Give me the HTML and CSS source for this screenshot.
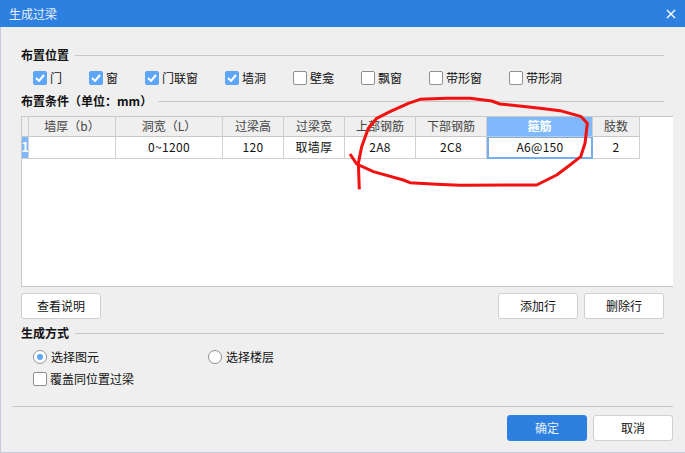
FILE: index.html
```html
<!DOCTYPE html>
<html lang="zh-CN">
<head>
<meta charset="utf-8">
<title>生成过梁</title>
<link rel="stylesheet" href="styles.css">
</head>
<body>
<div class="dialog">
  <header class="titlebar">
    <span class="title">生成过梁</span>
    <svg class="close" width="10" height="10" viewBox="0 0 10 10"><path d="M1 1l8 8M9 1l-8 8" stroke="#fff" stroke-width="1.4" fill="none"/></svg>
  </header>
  <main class="content">
    <div class="section-head first"><span class="section-name">布置位置</span><span class="rule"></span></div>
    <div class="check-row">
      <label class="opt w56"><span class="box on"><svg width="10" height="8" viewBox="0 0 10 8"><path d="M1 4l3 3 5-6" stroke="#fff" stroke-width="2" fill="none"/></svg></span>门</label>
      <label class="opt w56"><span class="box on"><svg width="10" height="8" viewBox="0 0 10 8"><path d="M1 4l3 3 5-6" stroke="#fff" stroke-width="2" fill="none"/></svg></span>窗</label>
      <label class="opt w80"><span class="box on"><svg width="10" height="8" viewBox="0 0 10 8"><path d="M1 4l3 3 5-6" stroke="#fff" stroke-width="2" fill="none"/></svg></span>门联窗</label>
      <label class="opt w68"><span class="box on"><svg width="10" height="8" viewBox="0 0 10 8"><path d="M1 4l3 3 5-6" stroke="#fff" stroke-width="2" fill="none"/></svg></span>墙洞</label>
      <label class="opt w68"><span class="box"></span>壁龛</label>
      <label class="opt w68"><span class="box"></span>飘窗</label>
      <label class="opt w80"><span class="box"></span>带形窗</label>
      <label class="opt"><span class="box"></span>带形洞</label>
    </div>
    <div class="section-head second"><span class="section-name">布置条件（单位：mm）</span><span class="rule"></span></div>
    <div class="grid-wrap">
      <div class="grid">
        <div class="hd"></div>
        <div class="hd">墙厚（b）</div>
        <div class="hd">洞宽（L）</div>
        <div class="hd">过梁高</div>
        <div class="hd">过梁宽</div>
        <div class="hd">上部钢筋</div>
        <div class="hd">下部钢筋</div>
        <div class="hd active">箍筋</div>
        <div class="hd">肢数</div>
        <div class="cell rownum">1</div>
        <div class="cell"></div>
        <div class="cell">0~1200</div>
        <div class="cell">120</div>
        <div class="cell">取墙厚</div>
        <div class="cell">2A8</div>
        <div class="cell">2C8</div>
        <div class="cell current">A6@150</div>
        <div class="cell">2</div>
      </div>
    </div>
    <div class="grid-actions">
      <button class="btn">查看说明</button>
      <span class="spacer"></span>
      <button class="btn">添加行</button>
      <button class="btn">删除行</button>
    </div>
    <div class="section-head third"><span class="section-name">生成方式</span><span class="rule"></span></div>
    <div class="radio-row">
      <label class="opt w175"><span class="radio on"></span>选择图元</label>
      <label class="opt"><span class="radio"></span>选择楼层</label>
    </div>
    <div class="overwrite"><label class="opt"><span class="box"></span>覆盖同位置过梁</label></div>
  </main>
  <footer class="footer">
    <button class="btn primary">确定</button>
    <button class="btn">取消</button>
  </footer>
</div>
<svg class="markup" width="685" height="453" viewBox="0 0 685 453">
  <path transform="translate(340) scale(.33333)" d="M30 462L50 492L100 515L190 540L210 548L290 553L360 556L590 555L650 525L690 495L722 470L735 430L742 370L722 349L660 332L600 325L480 312L455 303L390 295L320 295L240 298L205 310L150 335L110 355L85 385L65 440L55 490L58 568" fill="none" stroke="#f21010" stroke-width="9" stroke-linejoin="round"/>
</svg>
</body>
</html>
```

FILE: styles.css
```css
* { box-sizing: border-box; }
html, body { margin: 0; padding: 0; }
body {
  width: 685px;
  height: 453px;
  overflow: hidden;
  position: relative;
  font-family: "Noto Sans CJK SC", "Liberation Sans", sans-serif;
  font-size: 12px;
  line-height: 16px;
  color: #111;
  background: #efefef;
}
.dialog {
  width: 685px;
  height: 453px;
  display: flex;
  flex-direction: column;
  border-left: 1px solid #c5cbdc;
  border-bottom: 1px solid #c5cbdc;
}
.titlebar {
  height: 27px;
  margin-left: -1px;
  flex: none;
  background: #2d7fe0;
  color: #fff;
  display: flex;
  align-items: center;
  justify-content: space-between;
  padding: 0 9px;
}
.title { color: #e8f1fc; }
.content { flex: none; height: 379px; padding: 0 20px; }
.section-head { display: flex; align-items: center; gap: 6px; height: 16px; margin-right: 1px; font-weight: 700; }
.section-head.first { margin-top: 20px; }
.section-head.second { margin-top: 7px; }
.section-head.third { margin-top: 6px; }
.section-name { white-space: nowrap; }
.rule { flex: 1; height: 1px; background: #c8c8c8; }
.check-row { display: flex; margin: 7px 0 0 12px; height: 16px; align-items: center; }
.opt { display: flex; align-items: center; gap: 3px; white-space: nowrap; }
.w56 { width: 56px; }
.w68 { width: 68px; }
.w80 { width: 80px; }
.w175 { width: 175px; }
.box {
  width: 14px;
  height: 14px;
  border: 1px solid #8f8f8f;
  border-radius: 2px;
  background: #fff;
  display: flex;
  align-items: center;
  justify-content: center;
  flex: none;
}
.box.on { background: #5ea6f8; border-color: #5ea6f8; }
.radio {
  width: 14px;
  height: 14px;
  border: 1px solid #8f8f8f;
  border-radius: 50%;
  background: #fff;
  flex: none;
  display: flex;
  align-items: center;
  justify-content: center;
}
.radio.on::after {
  content: "";
  width: 6px;
  height: 6px;
  border-radius: 50%;
  background: #5ea6f8;
}
.grid-wrap {
  margin-top: 7px;
  height: 171px;
  background: #fff;
  border: 1px solid #c8c8c8;
  border-right: 0;
  width: 652px;
}
.grid {
  display: grid;
  grid-template-columns: 7px 87px 107px 61px 61px 71px 71px 106px 47px;
  grid-template-rows: 20px 22px;
  width: max-content;
}
.hd, .cell {
  display: flex;
  align-items: center;
  justify-content: center;
  border-right: 1px solid #d0d0d0;
  border-bottom: 1px solid #d0d0d0;
  padding-bottom: 1px;
}
.cell { letter-spacing: .3px; }
.hd { background: #efefef; color: #444; border-bottom-color: #c8c8c8; }
.hd.active { background: #7fb9fb; color: #fff; font-weight: 700; }
.cell.rownum { background: #7fb9fb; color: #fff; font-size: 13px; font-weight: 700; letter-spacing: 0; }
.cell.current { border: 2px solid #74aef0; border-top-width: 1px; }
.grid-actions { display: flex; gap: 6px; margin: 6px 1px 0 0; }
.spacer { flex: 1; }
.btn {
  width: 80px;
  height: 26px;
  padding: 0;
  font: inherit;
  color: #111;
  background: #fff;
  border: 1px solid #cfcfcf;
  border-radius: 3px;
}
.btn.primary { background: #2d7fe0; border-color: #2d7fe0; color: #e8f1fc; }
.radio-row { display: flex; margin: 8px 0 0 12px; height: 16px; align-items: center; }
.radio-row .opt { gap: 4px; }
.overwrite { margin: 6px 0 0 12px; height: 16px; display: flex; align-items: center; }
.footer {
  flex: none;
  margin-left: 11px;
  margin-right: 12px;
  height: 46px;
  border-top: 1px solid #c8c8c8;
  display: flex;
  justify-content: flex-end;
  align-items: flex-start;
  gap: 6px;
  padding-top: 8px;
}
.markup { position: absolute; left: 0; top: 0; pointer-events: none; }
```
